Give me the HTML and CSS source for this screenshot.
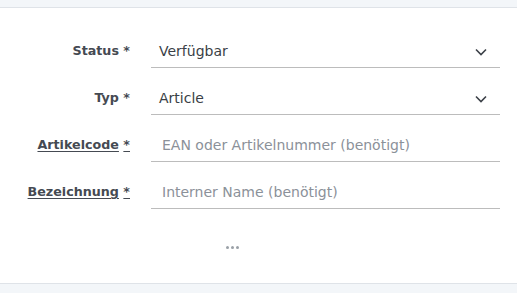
FILE: index.html
```html
<!DOCTYPE html>
<html lang="de">
<head>
  <meta charset="UTF-8">
  <title>Artikel</title>
  <link rel="stylesheet" href="styles.css">
</head>
<body>
  <div class="band top"></div>
  <div class="panel">
    <form class="form">
      <label class="label" for="status">Status *</label>
      <div class="field select">
        <span class="value">Verfügbar</span>
        <svg class="chev" width="12" height="8" viewBox="0 0 12 8"><path d="M1 1.5l5 5 5-5" fill="none" stroke="#3c4148" stroke-width="1.6"/></svg>
      </div>

      <label class="label" for="typ">Typ *</label>
      <div class="field select">
        <span class="value">Article</span>
        <svg class="chev" width="12" height="8" viewBox="0 0 12 8"><path d="M1 1.5l5 5 5-5" fill="none" stroke="#3c4148" stroke-width="1.6"/></svg>
      </div>

      <label class="label" for="code"><u>Artikelcode</u> <u>*</u></label>
      <div class="field">
        <input id="code" type="text" placeholder="EAN oder Artikelnummer (benötigt)">
      </div>

      <label class="label" for="name"><u>Bezeichnung</u> <u>*</u></label>
      <div class="field">
        <input id="name" type="text" placeholder="Interner Name (benötigt)">
      </div>
    </form>
    <div class="more"><span></span><span></span><span></span></div>
  </div>
  <div class="band bottom"></div>
</body>
</html>
```

FILE: styles.css
```css
body {
  margin: 0;
  font-family: "DejaVu Sans", Verdana, sans-serif;
  background: #f3f6f9;
  color: #40454c;
}

.band {
  background: #f3f6f9;
}

.band.top {
  height: 7px;
  border-bottom: 1px solid #dfe3e8;
}

.band.bottom {
  height: 10px;
  border-top: 1px solid #dfe3e8;
}

.panel {
  background: #fff;
  padding: 27px 17px 0 0;
  height: 275px;
  box-sizing: border-box;
}

.form {
  display: grid;
  grid-template-columns: 130px 1fr;
  column-gap: 21px;
  row-gap: 14px;
  align-items: end;
}

.label {
  text-align: right;
  font-weight: bold;
  font-size: 12.7px;
  color: #454a52;
  padding-bottom: 10px;
}

.label u {
  text-underline-offset: 2px;
}

.field {
  display: flex;
  align-items: center;
  height: 32px;
  border-bottom: 1px solid #bcbcbc;
  padding: 0 13px 0 8px;
  font-size: 14px;
}

.value {
  flex: 1;
  color: #3a3f46;
}

.chev {
  margin-top: 1px;
}

.field input {
  border: none;
  outline: none;
  width: 100%;
  padding: 0 0 0 3px;
  font: inherit;
  font-size: 14px;
  color: #3a3f46;
  background: transparent;
}

.field input::placeholder {
  color: #8b9199;
}

/* three dots for "more fields" */
.more {
  display: flex;
  justify-content: center;
  gap: 2px;
  margin: 37px 0 0 -36px;
}

.more span {
  width: 3px;
  height: 3px;
  border-radius: 50%;
  background: #9aa0a7;
}
```
